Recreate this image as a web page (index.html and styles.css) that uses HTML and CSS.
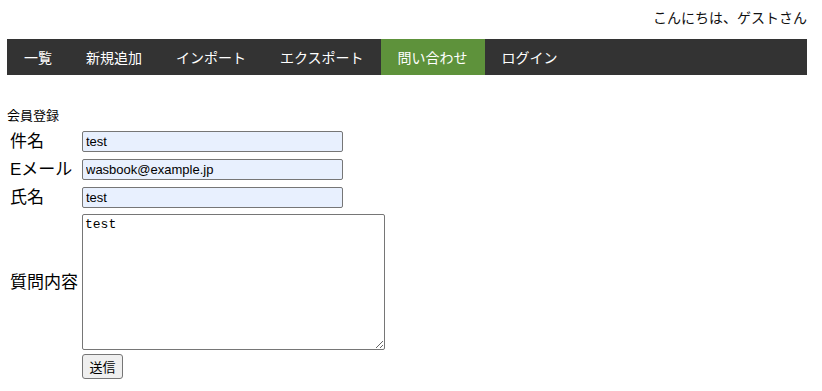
FILE: index.html
```html
<!DOCTYPE html>
<html lang="ja">

<head>
  <meta charset="UTF-8">
  <meta name="viewport" content="width=device-width, initial-scale=1.0">
  <title>会員登録</title>
  <link rel="stylesheet" href="styles.css">
</head>

<body>
  <div class="wrapper">
    <header class="top">
      <p class="greeting">こんにちは、ゲストさん</p>
    </header>

    <nav class="menu">
      <a href="#" class="menu-item">一覧</a>
      <a href="#" class="menu-item">新規追加</a>
      <a href="#" class="menu-item">インポート</a>
      <a href="#" class="menu-item">エクスポート</a>
      <a href="#" class="menu-item active">問い合わせ</a>
      <a href="#" class="menu-item">ログイン</a>
    </nav>

    <main class="content">
      <h2 class="page-title">会員登録</h2>
      <form class="contact-form">
        <div class="row">
          <label for="subject">件名</label>
          <input type="text" id="subject" class="field" value="test">
        </div>
        <div class="row">
          <label for="email">Eメール</label>
          <input type="text" id="email" class="field" value="wasbook@example.jp">
        </div>
        <div class="row row-last">
          <label for="name">氏名</label>
          <input type="text" id="name" class="field" value="test">
        </div>
        <div class="row row-text">
          <label for="question">質問内容</label>
          <textarea id="question" class="message">test</textarea>
        </div>
        <div class="row">
          <span class="spacer"></span>
          <button type="submit" class="submit">送信</button>
        </div>
      </form>
    </main>
  </div>
</body>

</html>
```

FILE: styles.css
```css
* {
  margin: 0;
  padding: 0;
  box-sizing: border-box;
}

body {
  font-family: "Liberation Sans", "Noto Sans CJK JP", sans-serif;
  background: #fff;
  color: #000;
}

.wrapper {
  width: 800px;
  margin: 0 7px;
}

.top {
  height: 39px;
  display: flex;
  justify-content: flex-end;
  align-items: flex-start;
}

.greeting {
  font-size: 14px;
  line-height: 20px;
  margin-top: 8px;
  color: #111;
}

.menu {
  display: flex;
  height: 36px;
  background: #333;
}

.menu-item {
  display: flex;
  align-items: center;
  padding: 0 17px;
  color: #fff;
  font-size: 14px;
  text-decoration: none;
}

.menu-item.active {
  background: #5e923b;
}

.page-title {
  font-size: 13px;
  font-weight: normal;
  line-height: 18px;
  margin-top: 32px;
}

.contact-form {
  margin-top: 6px;
}

.row {
  display: flex;
  align-items: center;
  margin-bottom: 7px;
}

.row-last {
  margin-bottom: 6px;
}

.row-text {
  margin-bottom: 4px;
}

.row label,
.spacer {
  width: 75px;
  padding-left: 3px;
  font-size: 17px;
  line-height: 21px;
}

.field {
  width: 261px;
  height: 21px;
  padding: 1px 3px;
  font-family: "Liberation Sans", sans-serif;
  font-size: 13px;
  background: #e8f0fe;
  border: 1px solid #767676;
  border-radius: 2px;
}

.message {
  width: 303px;
  height: 136px;
  padding: 2px 2px;
  font-family: "Liberation Mono", "Noto Sans CJK JP", monospace;
  font-size: 13px;
  border: 1px solid #767676;
  border-radius: 2px;
  resize: both;
}

.submit {
  width: 41px;
  height: 25px;
  font-family: "Noto Sans CJK JP", sans-serif;
  font-size: 13px;
  background: #efefef;
  border: 1px solid #767676;
  border-radius: 3px;
  color: #000;
}
```
